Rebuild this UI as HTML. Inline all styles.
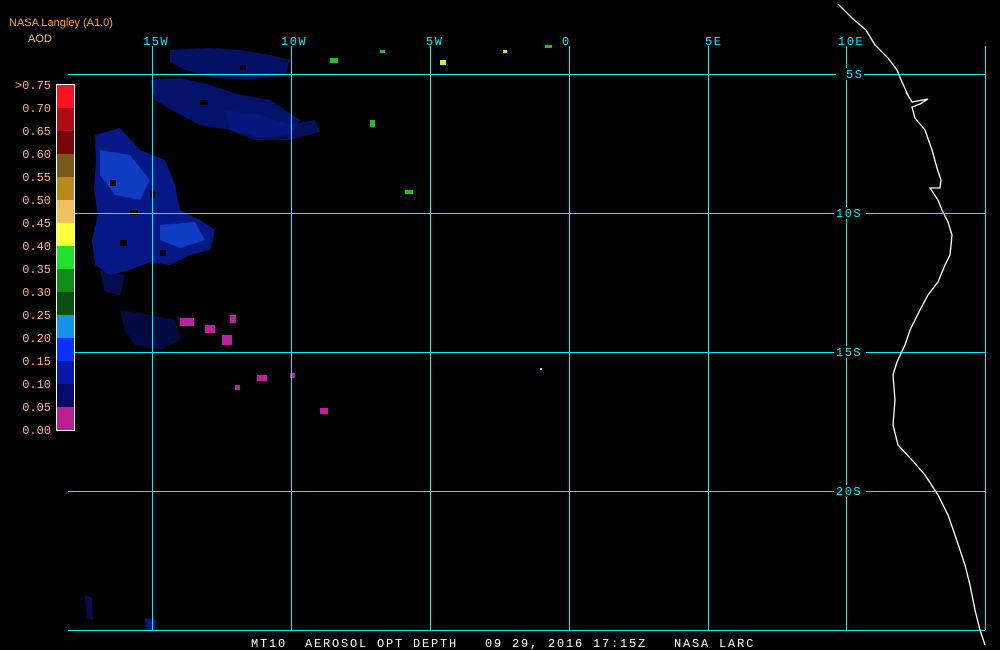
<!DOCTYPE html>
<html><head><meta charset="utf-8"><style>
html,body{margin:0;padding:0;background:#000;width:1000px;height:650px;overflow:hidden}
svg{display:block}
text{font-family:"Liberation Mono",monospace}
</style></head><body>
<svg width="1000" height="650" xmlns="http://www.w3.org/2000/svg">
<rect width="1000" height="650" fill="#000"/>
<g fill="#0a22c0" opacity="0.7">
<path d="M95 135 L120 128 L140 150 L165 160 L175 185 L180 210 L200 220 L215 230 L210 250 L190 255 L170 265 L150 262 L130 270 L110 275 L95 265 L92 240 L98 215 L94 190 L96 160Z"/>
<path d="M150 80 L180 78 L210 85 L240 95 L270 100 L285 110 L300 120 L290 135 L260 138 L230 130 L200 125 L175 112 L155 100Z" opacity="0.8"/>
<path d="M170 50 L210 48 L240 50 L270 55 L290 60 L285 75 L250 80 L215 78 L185 70 L170 62Z" opacity="0.75"/>
<path d="M225 110 L260 115 L290 125 L315 120 L320 132 L290 140 L255 140 L230 130Z" opacity="0.7"/>
<path d="M120 310 L150 315 L175 320 L180 340 L160 350 L135 345 L125 330Z" opacity="0.5"/>
<path d="M100 270 L125 275 L120 295 L105 292Z" opacity="0.6"/>
<path d="M85 595 L92 598 L93 620 L87 618Z" opacity="0.6"/>
<path d="M145 618 L156 620 L155 630 L146 628Z"/>
</g>
<g fill="#1a60ff" opacity="0.5">
<path d="M100 150 L130 155 L150 180 L140 200 L115 195 L100 175Z"/>
<path d="M160 225 L195 222 L205 240 L180 248 L160 240Z"/>
</g>
<g fill="#000">
<rect x="110" y="180" width="6" height="6"/><rect x="130" y="210" width="8" height="5"/><rect x="150" y="190" width="5" height="8"/><rect x="120" y="240" width="7" height="6"/><rect x="200" y="100" width="8" height="5"/><rect x="240" y="65" width="6" height="5"/><rect x="160" y="250" width="6" height="6"/>
</g>
<g fill="#c020a0">
<rect x="180" y="318" width="14" height="8"/><rect x="205" y="325" width="10" height="8"/>
<rect x="222" y="335" width="10" height="10"/><rect x="230" y="315" width="6" height="8"/>
<rect x="257" y="375" width="10" height="6"/><rect x="235" y="385" width="5" height="5"/>
<rect x="320" y="408" width="8" height="6"/><rect x="290" y="373" width="5" height="5"/>
</g>
<g fill="#20c020"><rect x="330" y="58" width="8" height="5"/><rect x="370" y="120" width="5" height="7"/><rect x="405" y="190" width="8" height="4"/><rect x="380" y="50" width="5" height="3"/><rect x="545" y="45" width="7" height="3"/></g>
<g fill="#e0e040"><rect x="440" y="60" width="6" height="5"/><rect x="503" y="50" width="4" height="3"/><rect x="540" y="368" width="2" height="2"/></g>
<g stroke="#00f0ff" stroke-width="1" shape-rendering="crispEdges">
<line x1="68" y1="74.5" x2="985" y2="74.5"/>
<line x1="68" y1="213.5" x2="985" y2="213.5"/>
<line x1="68" y1="352.5" x2="985" y2="352.5"/>
<line x1="68" y1="491.5" x2="985" y2="491.5"/>
<line x1="68" y1="630.5" x2="985" y2="630.5"/>
<line x1="152.5" y1="46" x2="152.5" y2="630"/>
<line x1="291.5" y1="46" x2="291.5" y2="630"/>
<line x1="430.5" y1="46" x2="430.5" y2="630"/>
<line x1="569.5" y1="46" x2="569.5" y2="630"/>
<line x1="708.5" y1="46" x2="708.5" y2="630"/>
<line x1="846.5" y1="46" x2="846.5" y2="630"/>
<line x1="985.5" y1="46" x2="985.5" y2="630"/>
</g>
<g fill="#000"><rect x="836" y="68" width="28" height="12"/><rect x="834" y="207" width="32" height="12"/><rect x="834" y="346" width="32" height="12"/><rect x="834" y="485" width="32" height="12"/></g>
<g fill="#00f0ff" font-size="12" letter-spacing="1.5">
<text x="143" y="45">15W</text><text x="281" y="45">10W</text><text x="426" y="45">5W</text>
<text x="562" y="45">0</text><text x="705" y="45">5E</text><text x="838" y="45">10E</text>
<text x="846" y="78">5S</text><text x="836" y="217">10S</text><text x="836" y="356">15S</text><text x="836" y="495">20S</text>
</g>
<polyline fill="none" stroke="#fff" stroke-width="1.3" points="838,4 852,18 866,30 875,45 888,58 897,70 902,82 908,95 906,92 912,102 928,99 920,104 912,107 915,118 925,130 932,150 937,168 941,180 940,188 930,188 938,200 942,210 948,222 952,235 950,255 945,265 938,282 928,295 920,310 910,330 905,345 897,362 893,375 895,400 893,425 898,445 912,460 925,475 938,495 948,515 955,535 960,550 965,565 970,585 975,610 980,630 985,645"/>
<g shape-rendering="crispEdges">
<rect x="57" y="85" width="17" height="23" fill="#ff1020"/>
<rect x="57" y="108" width="17" height="23" fill="#b00c14"/>
<rect x="57" y="131" width="17" height="23" fill="#740808"/>
<rect x="57" y="154" width="17" height="23" fill="#7a5a18"/>
<rect x="57" y="177" width="17" height="23" fill="#b88a20"/>
<rect x="57" y="200" width="17" height="23" fill="#f0c060"/>
<rect x="57" y="223" width="17" height="23" fill="#ffff40"/>
<rect x="57" y="246" width="17" height="23" fill="#20e030"/>
<rect x="57" y="269" width="17" height="23" fill="#148a18"/>
<rect x="57" y="292" width="17" height="23" fill="#0a5010"/>
<rect x="57" y="315" width="17" height="23" fill="#1890e8"/>
<rect x="57" y="338" width="17" height="23" fill="#1030ff"/>
<rect x="57" y="361" width="17" height="23" fill="#0818a8"/>
<rect x="57" y="384" width="17" height="23" fill="#040c68"/>
<rect x="57" y="407" width="17" height="23" fill="#b82090"/>
<rect x="56.5" y="84.5" width="18" height="346" fill="none" stroke="#fff"/>
</g>
<g fill="#ffb080" font-size="12" text-anchor="end">
<text x="51" y="89">&gt;0.75</text><text x="51" y="112">0.70</text><text x="51" y="135">0.65</text>
<text x="51" y="158">0.60</text><text x="51" y="181">0.55</text><text x="51" y="204">0.50</text>
<text x="51" y="227">0.45</text><text x="51" y="250">0.40</text><text x="51" y="273">0.35</text>
<text x="51" y="296">0.30</text><text x="51" y="319">0.25</text><text x="51" y="342">0.20</text>
<text x="51" y="365">0.15</text><text x="51" y="388">0.10</text><text x="51" y="411">0.05</text>
<text x="51" y="434">0.00</text>
</g>
<text x="9" y="26" fill="#ffa020" style="font-family:'Liberation Sans',sans-serif" font-size="11">NASA Langley (A1.0)</text>
<text x="28" y="42" fill="#ffb080" style="font-family:'Liberation Sans',sans-serif" font-size="11">AOD</text>
<text x="251" y="647" fill="#fff" font-size="12" letter-spacing="1.8" xml:space="preserve">MT10  AEROSOL OPT DEPTH   09 29, 2016 17:15Z   NASA LARC</text>
</svg>
</body></html>
